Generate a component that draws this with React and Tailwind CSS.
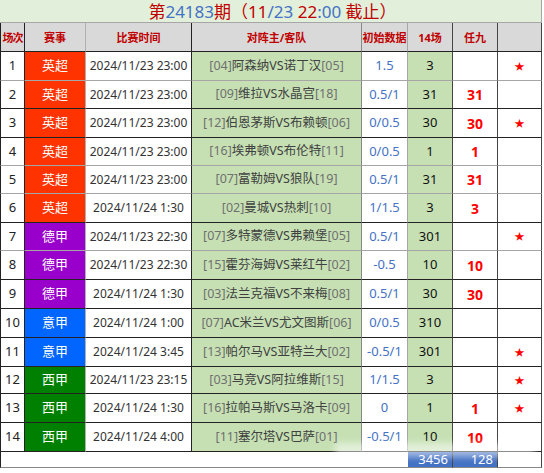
const leagues = {
  英超: "bg-[#ff3300]",
  德甲: "bg-[#9900cc]",
  意甲: "bg-[#0066ff]",
  西甲: "bg-[#008000]",
};

const rows = [
  [1, "英超", "2024/11/23 23:00", "04", "阿森纳VS诺丁汉", "05", "1.5", "3", "", true, "h-[29px]", "border-b-[#a6a6a6]"],
  [2, "英超", "2024/11/23 23:00", "09", "维拉VS水晶宫", "18", "0.5/1", "31", "31", false, "h-[28px]", "border-b-[#222]"],
  [3, "英超", "2024/11/23 23:00", "12", "伯恩茅斯VS布赖顿", "06", "0/0.5", "30", "30", true, "h-[29px]", "border-b-[#222]"],
  [4, "英超", "2024/11/23 23:00", "16", "埃弗顿VS布伦特", "11", "0/0.5", "1", "1", false, "h-[28px]", "border-b-[#a6a6a6]"],
  [5, "英超", "2024/11/23 23:00", "07", "富勒姆VS狼队", "19", "0.5/1", "31", "31", false, "h-[28px]", "border-b-[#a6a6a6]"],
  [6, "英超", "2024/11/24 1:30", "02", "曼城VS热刺", "10", "1/1.5", "3", "3", false, "h-[29px]", "border-b-[#222]"],
  [7, "德甲", "2024/11/23 22:30", "07", "多特蒙德VS弗赖堡", "05", "0.5/1", "301", "", true, "h-[28px]", "border-b-[#a6a6a6]"],
  [8, "德甲", "2024/11/23 22:30", "15", "霍芬海姆VS莱红牛", "02", "-0.5", "10", "10", false, "h-[29px]", "border-b-[#222]"],
  [9, "德甲", "2024/11/24 1:30", "03", "法兰克福VS不来梅", "08", "0.5/1", "30", "30", false, "h-[29px]", "border-b-[#222]"],
  [10, "意甲", "2024/11/24 1:00", "07", "AC米兰VS尤文图斯", "06", "0/0.5", "310", "", false, "h-[29px]", "border-b-[#222]"],
  [11, "意甲", "2024/11/24 3:45", "13", "帕尔马VS亚特兰大", "02", "-0.5/1", "301", "", true, "h-[29px]", "border-b-[#222]"],
  [12, "西甲", "2024/11/23 23:15", "03", "马竞VS阿拉维斯", "15", "1/1.5", "3", "", true, "h-[27px]", "border-b-[#222]"],
  [13, "西甲", "2024/11/24 1:30", "16", "拉帕马斯VS马洛卡", "09", "0", "1", "1", true, "h-[29px]", "border-b-[#222]"],
  [14, "西甲", "2024/11/24 4:00", "11", "塞尔塔VS巴萨", "01", "-0.5/1", "10", "10", false, "h-[29px]", "border-b-[#222]"],
];

const cell = "flex items-center justify-center border-b border-r box-border";

export default function App() {
  return (
    <div
      className="relative w-[544px] h-[473px] bg-white overflow-hidden"
      style={{ fontFamily: '"Noto Sans", "Noto Sans CJK SC", sans-serif' }}
    >
      <div className="w-[542px]">
        {/* title */}
        <div className="h-[23px] bg-[#e2efda] border-r border-b border-[#a6a6a6] flex items-center justify-center text-[17px] leading-none text-[#c00000] pl-[4px]">
          <span>第</span>
          <span className="text-[#4472c4]">24183</span>
          <span>期（11</span>
          <span className="text-[#4472c4]">/23</span>
          <span>&nbsp;22</span>
          <span className="text-[#4472c4]">:00</span>
          <span>&nbsp;截止）</span>
        </div>

        {/* header */}
        <div className="flex h-[29px] bg-[#d9d9d9] text-[11px] font-bold text-[#c00000] leading-none">
          <div className={`${cell} w-[25px] border-l border-l-[#222] border-b-[#222] border-r-[#222] tracking-[-1px]`}>场次</div>
          <div className={`${cell} w-[61px] border-b-[#222] border-r-[#b0b0b0]`}>赛事</div>
          <div className={`${cell} w-[106px] border-b-[#222] border-r-[#222]`}>比赛时间</div>
          <div className={`${cell} w-[170px] border-b-[#222] border-r-[#888]`}>对阵主/客队</div>
          <div className={`${cell} w-[46px] border-b-[#222] border-r-[#a6a6a6] whitespace-nowrap`}>初始数据</div>
          <div className={`${cell} w-[45px] border-b-[#222] border-r-[#444]`}>14场</div>
          <div className={`${cell} w-[45px] border-b-[#222] border-r-[#444]`}>任九</div>
          <div className={`${cell} w-[44px] border-b-[#222] border-r-[#444]`}></div>
        </div>

        {rows.map(([n, lg, time, h1, teams, h2, init, c14, r9, star, hc, bc]) => (
          <div key={n} className={`flex ${hc}`}>
            <div className={`${cell} ${bc} w-[25px] border-l border-l-[#222] border-r-[#222] text-[13px] text-[#222]`}>{n}</div>
            <div className={`${cell} ${bc} ${leagues[lg]} w-[61px] border-r-[#b0b0b0] text-[13px] text-white`}>{lg}</div>
            <div className={`${cell} ${bc} w-[106px] border-r-[#222] text-[12px] text-[#333] whitespace-nowrap`}>{time}</div>
            <div className={`${cell} ${bc} w-[170px] bg-[#c6e0b4] border-r-[#888] text-[12.5px] text-[#404040] whitespace-nowrap`}>
              <span className="text-[#707070]">[{h1}]</span>
              {teams}
              <span className="text-[#707070]">[{h2}]</span>
            </div>
            <div className={`${cell} ${bc} w-[46px] border-r-[#a6a6a6] text-[13px] text-[#4472c4] whitespace-nowrap`}>{init}</div>
            <div className={`${cell} ${bc} w-[45px] bg-[#c6e0b4] border-r-[#444] text-[13px] text-[#111]`}>{c14}</div>
            <div className={`${cell} ${bc} w-[45px] border-r-[#444] text-[14px] font-bold text-[#ff0000]`}>{r9}</div>
            <div className={`${cell} ${bc} w-[44px] border-r-[#444] text-[10px] text-[#ff0000]`}>{star ? "★" : ""}</div>
          </div>
        ))}

        {/* footer */}
        <div className="flex h-[16px] text-[13px] leading-none">
          <div className="w-[408px] border-l border-b border-[#888] border-l-[#222]"></div>
          <div className="w-[45px] bg-[#4472c4] border-r border-b border-r-[#444] border-b-[#888] text-white flex items-center justify-end pr-[4px]">3456</div>
          <div className="w-[45px] bg-[#4472c4] border-r border-b border-r-[#444] border-b-[#888] text-white flex items-center justify-end pr-[4px]">128</div>
          <div className="w-[44px] border-r border-b border-r-[#444] border-b-[#888]"></div>
        </div>
      </div>

      {/* faint watermark smear over the bottom right */}
      <div className="absolute left-[335px] top-[443px] w-[200px] h-[14px] bg-white/50 blur-[3px]"></div>
    </div>
  );
}
